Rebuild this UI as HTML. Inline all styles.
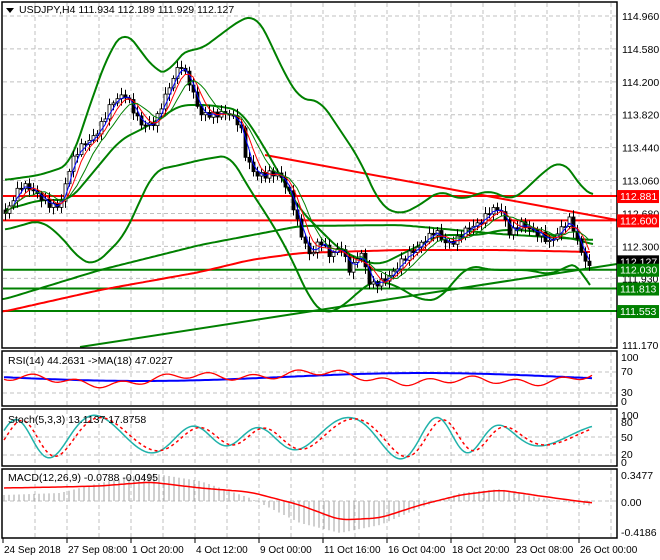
<!DOCTYPE html><html><head><meta charset="utf-8"><style>
html,body{margin:0;padding:0;background:#fff;}
svg{display:block;font-family:"Liberation Sans",sans-serif;}
</style></head><body>
<svg id="s" width="660" height="560" xmlns="http://www.w3.org/2000/svg">
<rect width="660" height="560" fill="#fff"/>
<g id="grid" stroke="#c0c0c0" stroke-dasharray="4,3" stroke-width="1"></g>
<g id="main"></g>
<g id="frames" fill="none" stroke="#000" stroke-width="1.5">
<rect x="2" y="2" width="615" height="346"/>
<rect x="2" y="351" width="615" height="55"/>
<rect x="2" y="409" width="615" height="57"/>
<rect x="2" y="469" width="615" height="69"/>
</g>
<g id="txt" font-size="10.5" fill="#000"></g>
</svg>
<script>
var S=document.getElementById('s'),NS='http://www.w3.org/2000/svg';
function el(p,t,a,txt){var e=document.createElementNS(NS,t);for(var k in a)e.setAttribute(k,a[k]);if(txt!=null)e.textContent=txt;document.getElementById(p).appendChild(e);return e;}
function interp(pts,x){for(var i=0;i<pts.length-1;i++){if(x>=pts[i][0]&&x<=pts[i+1][0]){var t=(x-pts[i][0])/(pts[i+1][0]-pts[i][0]);return pts[i][1]+t*(pts[i+1][1]-pts[i][1]);}}return pts[x<pts[0][0]?0:pts.length-1][1];}
function sm(pts){var r=[];for(var x=pts[0][0];x<=pts[pts.length-1][0];x+=3){var s=0,k=0;for(var d=-9;d<=9;d+=3){s+=interp(pts,x+d);k++;}r.push([x,s/k]);}return r;}
function pl(g,pts,c,w,da){var a={points:pts.map(function(p){return p[0].toFixed(1)+','+p[1].toFixed(1)}).join(' '),fill:'none',stroke:c,'stroke-width':w||1};if(da)a['stroke-dasharray']=da;el(g,'polyline',a);}
function y(p){return 16+(114.96-p)*86.6;}
for(var x=35;x<617;x+=32){el('grid','line',{x1:x,y1:3,x2:x,y2:348});el('grid','line',{x1:x,y1:352,x2:x,y2:405});el('grid','line',{x1:x,y1:410,x2:x,y2:465});el('grid','line',{x1:x,y1:470,x2:x,y2:537});}
var lv=[114.96,114.58,114.2,113.82,113.44,113.06,112.68,112.3,111.93,111.55];
lv.forEach(function(p){el('grid','line',{x1:3,y1:y(p),x2:617,y2:y(p)});});
[372,393,437,455].forEach(function(v){el('grid','line',{x1:3,y1:v,x2:617,y2:v});});
el('grid','line',{x1:3,y1:501,x2:617,y2:501});
var close=[[5,210],[20,190],[40,195],[60,205],[70,170],[80,150],[95,130],[110,105],[125,100],[140,120],[155,120],[170,90],[180,65],[190,80],[200,110],[215,120],[230,115],[240,120],[245,150],[255,175],[265,180],[280,175],[290,190],[300,230],[310,260],[320,245],[330,255],[340,240],[350,270],[360,255],[370,290],[380,280],[390,270],[400,262],[415,255],[425,240],[435,225],[445,240],[455,245],[465,235],[475,225],[490,205],[500,210],[510,240],[520,225],[530,225],[540,230],[550,245],[560,235],[570,220],[580,245],[592,270]];
var up=[[5,180],[40,175],[70,165],[95,90],[110,50],[125,30],[140,50],[155,70],[170,75],[175,60],[185,50],[200,50],[240,20],[255,15],[265,30],[280,65],[300,100],[320,100],[340,130],[360,160],[380,205],[400,215],[420,205],[440,190],[460,200],[475,195],[490,190],[510,200],[520,195],[540,175],[560,160],[575,175],[585,195],[593,194]];
var lo=[[5,230],[40,220],[60,235],[80,260],[95,265],[110,250],[125,235],[140,200],[155,170],[180,165],[200,160],[230,155],[250,190],[270,220],[290,255],[310,300],[325,315],[345,305],[360,290],[375,280],[395,285],[420,300],[440,300],[450,285],[470,265],[490,270],[510,270],[530,270],[550,275],[570,265],[580,262],[590,293]];
var mid=[[5,210],[40,200],[70,200],[95,170],[120,140],[150,125],[180,105],[210,105],[240,110],[260,140],[280,175],[300,210],[320,230],[340,250],[360,260],[380,265],[400,255],[420,245],[440,235],[460,235],[480,235],[500,230],[520,230],[540,232],[560,237],[580,240],[593,245]];
el('main','line',{x1:3,y1:y(112.881),x2:617,y2:y(112.881),stroke:'#f00','stroke-width':2});
el('main','line',{x1:3,y1:y(112.6),x2:617,y2:y(112.6),stroke:'#f00','stroke-width':2});
[112.03,111.813,111.553].forEach(function(p){el('main','line',{x1:3,y1:y(p),x2:617,y2:y(p),stroke:'#008000','stroke-width':2});});
el('main','line',{x1:265,y1:155,x2:617,y2:220,stroke:'#f00','stroke-width':2});
el('main','line',{x1:80,y1:347,x2:617,y2:264,stroke:'#008000','stroke-width':2});
pl('main',sm([[2,312],[100,290],[200,272],[250,260],[300,253],[400,250],[500,250],[592,252]]),'#f00',2);
pl('main',sm([[2,300],[100,270],[200,245],[300,226],[400,225],[500,234],[593,240]]),'#008000',2);
pl('main',sm(up),'#008000',2);pl('main',sm(lo),'#008000',2);pl('main',sm(mid),'#008000',2);
var prev=interp(close,5),cl=[];
for(var x=5;x<=592;x+=4){var c=interp(close,x)+Math.sin(x*1.7)*5+Math.cos(x*0.9)*3;var o=prev;var h=Math.min(o,c)-2-Math.abs(Math.sin(x))*5;var l=Math.max(o,c)+2+Math.abs(Math.cos(x*1.3))*5;
el('main','line',{x1:x+.5,y1:h,x2:x+.5,y2:l,stroke:'#000'});
el('main','rect',{x:x-1,y:Math.min(o,c),width:3,height:Math.max(1,Math.abs(c-o)),fill:c>o?'#000':'#fff',stroke:'#000','stroke-width':.8});
cl.push([x,c]);prev=c;}
function ma(arr,n){var r=[];for(var i=0;i<arr.length;i++){var s=0,k=0;for(var j=Math.max(0,i-n+1);j<=i;j++){s+=arr[j][1];k++;}r.push([arr[i][0],s/k]);}return r;}
pl('main',ma(cl,3),'#00f',1);pl('main',ma(cl,5),'#f00',1);pl('main',ma(cl,8),'#008000',1);
var rr=[],rb=[];for(var x=4;x<=592;x+=3){var base=378+Math.sin(x/60)*4-Math.sin(x/23)*3;rr.push([x,base+Math.sin(x/7)*3]);rb.push([x,377+Math.sin(x/90)*4]);}
pl('main',rb,'#00f',2);pl('main',rr,'#f00',1.3);
var st=[],sd=[];for(var x=4;x<=592;x+=2){var v=437-22*Math.sin(x/13+Math.sin(x/37))*(0.7+0.3*Math.sin(x/50));st.push([x,Math.max(412,Math.min(463,v))]);var v2=437-20*Math.sin((x-6)/13+Math.sin((x-6)/37))*(0.7+0.3*Math.sin(x/50));sd.push([x,Math.max(413,Math.min(462,v2))]);}
pl('main',st,'#20b2aa',1.5);pl('main',sd,'#f00',1.5,'3,3');
var mv=[[4,492],[60,490],[100,480],[150,470],[200,478],[250,495],[300,520],[340,530],[380,522],[420,505],[460,490],[500,486],[540,495],[592,503]];
for(var x=4;x<=592;x+=5){var v=interp(mv,x)+3;el('main','line',{x1:x,y1:501,x2:x,y2:v,stroke:'#b0b0b0','stroke-width':1.2});}
pl('main',sm([[4,488],[60,487],[100,486],[150,482],[200,488],[250,492],[300,505],[340,520],[380,518],[420,505],[460,495],[500,490],[540,496],[592,503]]),'#f00',1.5);
function T(x,yy,s,fill,bg){if(bg)el('txt','rect',{x:617,y:yy-10,width:42,height:13,fill:bg});el('txt','text',{x:x,y:yy,fill:fill||'#000'},s);}
lv.forEach(function(p){if(p==111.55)return;T(622,y(p)+4,p.toFixed(3));});
T(622,349,'111.170');
T(620,y(112.881)+4,'112.881','#fff','#f00');T(620,y(112.6)+4,'112.600','#fff','#f00');
T(620,y(112.127)+4,'112.127','#fff','#000');
T(620,y(112.03)+4,'112.030','#fff','#008000');T(620,y(111.813)+4,'111.813','#fff','#008000');T(620,y(111.553)+4,'111.553','#fff','#008000');
T(621,361,'100');T(621,375,'70');T(621,396,'30');T(621,405,'0');
T(621,419,'100');T(621,426,'80');T(621,441,'50');T(621,458,'20');T(621,466,'0');
T(621,479,'0.3477');T(621,506,'0.00');T(621,536,'-0.4186');
var tl=['24 Sep 2018','27 Sep 08:00','1 Oct 20:00','4 Oct 12:00','9 Oct 00:00','11 Oct 16:00','16 Oct 04:00','18 Oct 20:00','23 Oct 08:00','26 Oct 00:00'];
tl.forEach(function(s,i){var x=3+64*i;el('txt','line',{x1:x,y1:538,x2:x,y2:543,stroke:'#000'});el('txt','text',{x:x+1,y:553,'font-size':'10'},s);});
el('txt','polygon',{points:'6,8 14,8 10,13',fill:'#000'});
T(19,13,'USDJPY,H4  111.934 112.189 111.929 112.127');
T(8,364,'RSI(14) 44.2631  ->MA(18) 47.0227');
T(8,423,'Stoch(5,3,3) 13.1137 17.8758');
T(8,481,'MACD(12,26,9) -0.0788 -0.0495');
</script>
</body></html>
